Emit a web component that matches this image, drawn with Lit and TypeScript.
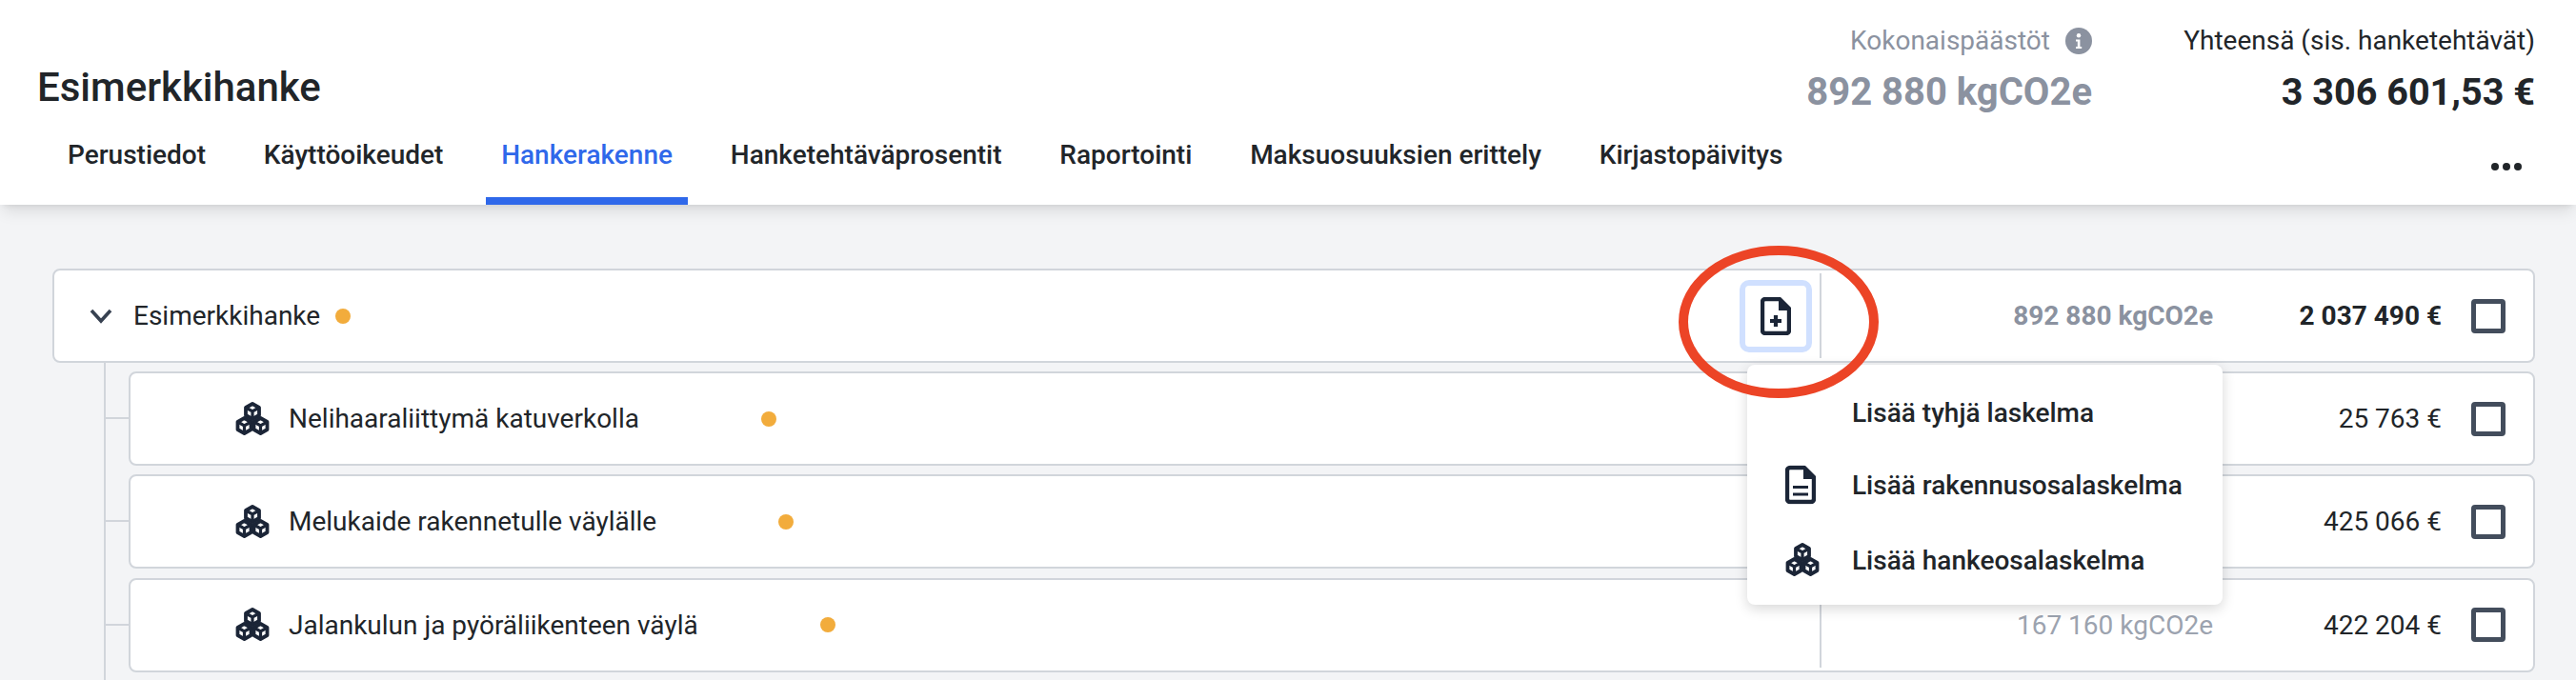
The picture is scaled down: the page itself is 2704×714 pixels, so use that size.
import { LitElement, html, css, svg } from "lit";
import { customElement } from "lit/decorators.js";

const DARK = "#1b2537";

const hex = (cx: number, cy: number) => {
  const r = 8, w = 7;
  return svg`<path d="M${cx} ${cy - r}L${cx + w} ${cy - r / 2}V${cy + r / 2}L${cx} ${cy + r}L${cx - w} ${cy + r / 2}V${cy - r / 2}Z" fill="#fff" stroke=${DARK} stroke-width="3.8" stroke-linejoin="round"/>
  <path d="M${cx - w} ${cy - r / 2}L${cx} ${cy}L${cx + w} ${cy - r / 2}M${cx} ${cy}V${cy + r}" fill="none" stroke=${DARK} stroke-width="3.2"/>`;
};
const cubes = html`<svg class="cubes" width="36" height="36" viewBox="0 0 36 36">${hex(18, 10)}${hex(9.5, 25)}${hex(26.5, 25)}</svg>`;

const docBase = svg`<path d="M5 2H20L30 12V35a3 3 0 0 1-3 3H5a3 3 0 0 1-3-3V5a3 3 0 0 1 3-3Z" fill="none" stroke=${DARK} stroke-width="4.4" stroke-linejoin="round"/><path d="M19 2L31 14H19Z" fill=${DARK}/>`;
const docPlus = html`<svg width="32" height="40" viewBox="0 0 32 40">${docBase}<path d="M10 25H22M16 19V31" stroke=${DARK} stroke-width="4.2" fill="none"/></svg>`;
const docLines = html`<svg width="32" height="41" viewBox="0 0 32 40">${docBase}<path d="M8 22.5H24M8 30H24" stroke=${DARK} stroke-width="3" fill="none"/></svg>`;

@customElement("app-root")
export class AppRoot extends LitElement {
  static styles = css`
    :host { display: block; position: relative; height: 714px; overflow: hidden; background: #f3f4f6;
      font-family: Roboto, "Liberation Sans", sans-serif; color: #212529; font-size: 28px; }
    .header { height: 215px; box-sizing: border-box; background: #fff; padding: 0 43px 0 39px;
      box-shadow: 0 10px 15px -3px rgb(0 0 0 / .1), 0 4px 6px -4px rgb(0 0 0 / .1); display: flex; flex-direction: column; position: relative; }
    .top { display: flex; align-items: flex-end; height: 122px; box-sizing: border-box; }
    .title { font-size: 42px; font-weight: 500; line-height: 44px; flex: 1; margin-bottom: 8px; }
    .stat { text-align: right; display: flex; flex-direction: column; gap: 9px; }
    .stat + .stat { margin-left: 98px; width: 367px; }
    .stat .label { line-height: 40px; display: flex; justify-content: flex-end; align-items: center; gap: 16px; white-space: nowrap; }
    .stat .val { font-size: 39.6px; font-weight: 700; line-height: 50px; white-space: nowrap; }
    .muted { color: #8b92a0; }
    .stat.muted .val { font-size: 40px; }
    .tabs { display: flex; gap: 28.8px; margin-left: 16px; flex: 1; align-items: stretch; }
    .tab { padding: 17px 16px 0; font-weight: 500; line-height: 48px; box-sizing: border-box; height: 93px; white-space: nowrap; }
    .tab.active { color: #2f68ea; border-bottom: 8px solid #2f68ea; }
    .more { margin-left: auto; margin-right: 14px; display: flex; gap: 4px; margin-top: 49px; align-self: flex-start; }
    .more i { width: 8px; height: 8px; border-radius: 50%; background: #212529; display: block; }
    .tree { padding: 67px 43px 0 55px; }
    .row { display: flex; align-items: stretch; height: 99px; box-sizing: border-box; background: #fff; border: 2px solid #d1d5db; border-radius: 8px; position: relative; }
    .kids { margin-left: 54px; border-left: 2px solid #d1d5db; padding: 9px 0 60px 24px; display: flex; flex-direction: column; gap: 9.33px; }
    .kids .row::before { content: ""; position: absolute; left: -26px; top: 46px; width: 24px; height: 2px; background: #d1d5db; }
    .main { flex: 1; display: flex; align-items: center; white-space: nowrap; padding-left: 37px; }
    .chev { margin-right: 22px; }
    .kids .main { padding-left: 110px; }
    .cubes { flex: none; display: block; }
    .kids .cubes { margin-right: 20px; }
    .dot { width: 16px; height: 16px; border-radius: 50%; background: #f2ac3c; flex: none; margin-left: 16px; }
    .kids .dot { margin-left: 128px; }
    .add { flex: none; width: 76px; height: 76px; margin: auto 8px auto 0; box-sizing: border-box; border: 6px solid #d0e0ff; border-radius: 10px; display: flex; align-items: center; justify-content: center; background: #fff; }
    .side { flex: none; width: 749px; box-sizing: border-box; margin: 3px 0; border-left: 2px solid #d1d5db; display: flex; align-items: center; padding-right: 29px; }
    .co { flex: 1; text-align: right; color: #9ca3af; white-space: nowrap; }
    .co.b { font-weight: 700; color: #8b92a0; }
    .eur { width: 240px; text-align: right; white-space: nowrap; }
    .eur.b { font-weight: 700; }
    .check { width: 36px; height: 36px; box-sizing: border-box; border: 5px solid #434d5c; border-radius: 4px; margin-left: 31px; flex: none; }
    .menu { position: absolute; left: 1834px; top: 383px; width: 499px; height: 252px; box-sizing: border-box; background: #fff; border-radius: 8px;
      box-shadow: 0 4px 14px rgb(0 0 0 / .16); display: flex; flex-direction: column; }
    .item { position: relative; display: flex; align-items: center; font-weight: 500; height: 40px; padding-left: 110px; white-space: nowrap; }
    .item svg { position: absolute; left: 40px; top: 50%; transform: translateY(-50%); }
    .item:nth-child(1) { margin-top: 30px; }
    .item:nth-child(2) { margin-top: 36px; }
    .item:nth-child(3) { margin-top: 39px; }
    .ring { position: absolute; left: 1762px; top: 258px; display: block; pointer-events: none; }
  `;

  row(name: string, co: string, eur: string) {
    return html`<div class="row">
      <div class="main">${cubes}<span>${name}</span><span class="dot"></span></div>
      <div class="side"><span class="co">${co}</span><span class="eur">${eur}</span><span class="check"></span></div>
    </div>`;
  }

  render() {
    const tabs = ["Perustiedot", "Käyttöoikeudet", "Hankerakenne", "Hanketehtäväprosentit", "Raportointi", "Maksuosuuksien erittely", "Kirjastopäivitys"];
    return html`
      <div class="header">
        <div class="top">
          <div class="title">Esimerkkihanke</div>
          <div class="stat muted">
            <div class="label">Kokonaispäästöt
              <svg width="28" height="28" viewBox="0 0 28 28"><circle cx="14" cy="14" r="14" fill="#8b92a0"/><circle cx="14" cy="8.2" r="2.2" fill="#fff"/><path d="M11 12.5H15.4V20H17.2V22H11V20H12.8V14.5H11Z" fill="#fff"/></svg>
            </div>
            <div class="val">892 880 kgCO2e</div>
          </div>
          <div class="stat">
            <div class="label">Yhteensä (sis. hanketehtävät)</div>
            <div class="val">3 306 601,53 €</div>
          </div>
        </div>
        <div class="tabs">
          ${tabs.map((t) => html`<div class="tab ${t === "Hankerakenne" ? "active" : ""}">${t}</div>`)}
          <div class="more"><i></i><i></i><i></i></div>
        </div>
      </div>
      <div class="tree">
        <div class="row">
          <div class="main">
            <svg class="chev" width="24" height="16" viewBox="0 0 24 16"><path d="M2 2L12 13L22 2" fill="none" stroke="#374151" stroke-width="3.6"/></svg>
            <span>Esimerkkihanke</span><span class="dot"></span>
          </div>
          <div class="add">${docPlus}</div>
          <div class="side"><span class="co b">892 880 kgCO2e</span><span class="eur b">2 037 490 €</span><span class="check"></span></div>
        </div>
        <div class="kids">
          ${this.row("Nelihaaraliittymä katuverkolla", "", "25 763 €")}
          ${this.row("Melukaide rakennetulle väylälle", "", "425 066 €")}
          ${this.row("Jalankulun ja pyöräliikenteen väylä", "167 160 kgCO2e", "422 204 €")}
        </div>
      </div>
      <div class="menu">
        <div class="item">Lisää tyhjä laskelma</div>
        <div class="item">${docLines}Lisää rakennusosalaskelma</div>
        <div class="item">${cubes}Lisää hankeosalaskelma</div>
      </div>
      <svg class="ring" width="210" height="160" viewBox="0 0 210 160"><ellipse cx="105" cy="80" rx="100" ry="75" fill="none" stroke="#ec4426" stroke-width="10"/></svg>
    `;
  }
}
